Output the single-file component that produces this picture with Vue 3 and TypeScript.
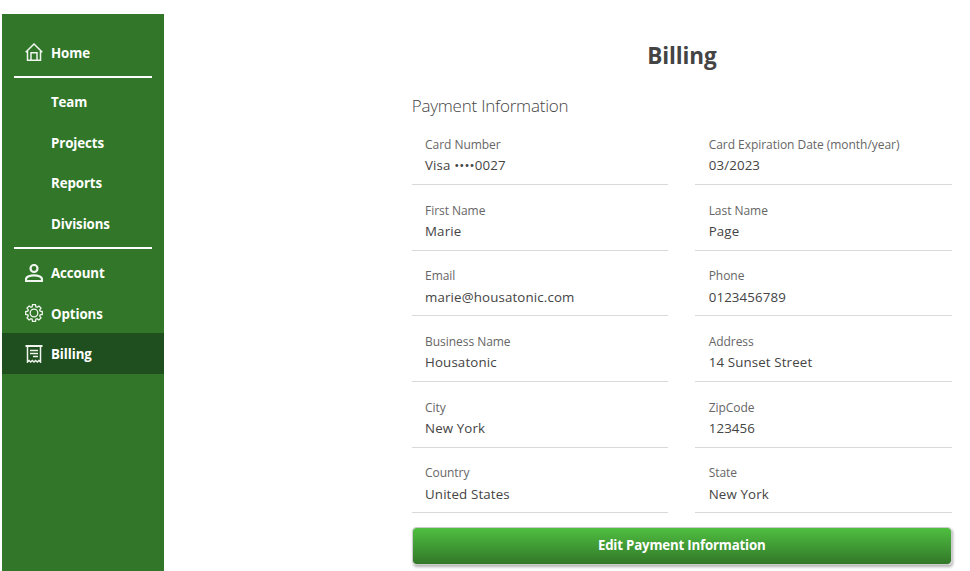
<script setup lang="ts">
interface Field { label: string; value: string }

const teamLinks: string[] = ['Team', 'Projects', 'Reports', 'Divisions']

const fields: Field[] = [
  { label: 'Card Number', value: 'Visa ••••0027' },
  { label: 'Card Expiration Date (month/year)', value: '03/2023' },
  { label: 'First Name', value: 'Marie' },
  { label: 'Last Name', value: 'Page' },
  { label: 'Email', value: 'marie@housatonic.com' },
  { label: 'Phone', value: '0123456789' },
  { label: 'Business Name', value: 'Housatonic' },
  { label: 'Address', value: '14 Sunset Street' },
  { label: 'City', value: 'New York' },
  { label: 'ZipCode', value: '123456' },
  { label: 'Country', value: 'United States' },
  { label: 'State', value: 'New York' },
]
</script>

<template>
  <div class="page">
    <nav class="sidebar">
      <a class="link">
        <svg class="icon" viewBox="0 0 18 18">
          <path d="M.7 9.2 9 1l8.300 8.200M2.500 8v9.200h13V8M6 17V9.700h6V17" />
        </svg>
        <span>Home</span>
      </a>
      <div class="divider"></div>
      <a v-for="name in teamLinks" :key="name" class="link sub"><span>{{ name }}</span></a>
      <div class="divider"></div>
      <a class="link">
        <svg class="icon person" viewBox="0 0 18 18">
          <circle cx="9" cy="4.500" r="3.500" />
          <path d="M1 17v-1.800c0-2.600 4.500-3.900 8-3.900s8 1.300 8 3.900V17z" />
        </svg>
        <span>Account</span>
      </a>
      <a class="link">
        <svg class="icon gear" viewBox="0 0 18 18">
          <circle cx="9" cy="9" r="3.800" />
          <path d="M7.500.7h3l.4 2.100 1.100.5 1.900-1.300 2.100 2.100L14.700 6l.5 1.100 2.100.4v3l-2.100.4-.5 1.100 1.300 1.900-2.100 2.100-1.900-1.300-1.100.5-.4 2.100h-3l-.4-2.100L6 14.700 4.100 16 2 13.900 3.300 12l-.5-1.100-2.100-.4v-3l2.100-.4L3.300 6 2 4.100 4.100 2 6 3.300l1.100-.5z" />
        </svg>
        <span>Options</span>
      </a>
      <a class="link active">
        <svg class="icon receipt" viewBox="0 0 18 18">
          <path class="bar" d="M.5 1h17" />
          <path d="M2.500 1v16l1.600-1.500L5.700 17l1.650-1.500L9 17l1.650-1.500L12.300 17l1.600-1.500L15.500 17V1M5 5.500h8M5 8.500h8M8 11.500h5" />
        </svg>
        <span>Billing</span>
      </a>
    </nav>

    <main class="content">
      <h1 class="title">Billing</h1>
      <h2 class="section">Payment Information</h2>
      <dl class="fields">
        <div v-for="field in fields" :key="field.label" class="field">
          <dt>{{ field.label }}</dt>
          <dd>{{ field.value }}</dd>
        </div>
      </dl>
      <button class="edit" type="button">Edit Payment Information</button>
    </main>
  </div>
</template>

<style>
body {
  background: #fff;
}
</style>

<style scoped>
.page {
  display: flex;
  box-sizing: border-box;
  height: 571px;
  padding: 14px 18px 0 2px;
  overflow: hidden;
  font-family: "Open Sans", "Noto Sans", sans-serif;
  color: #444;
}
.sidebar {
  box-sizing: border-box;
  width: 162px;
  flex: none;
  padding-top: 17.8px;
  background: #327729;
}
.link {
  display: flex;
  align-items: center;
  gap: 8px;
  box-sizing: border-box;
  height: 40.5px;
  padding-left: 23px;
  color: #fff;
  font-size: 13.3px;
  font-weight: 700;
  letter-spacing: -.1px;
  line-height: 20px;
}
.link span {
  padding-top: 1.3px;
}
.sub {
  padding-left: 49px;
}
.active {
  background: #1f4f1e;
}
.divider {
  height: 2px;
  margin: 3.5px 12px;
  background: #fff;
}
.icon {
  width: 18px;
  height: 18px;
  flex: none;
  fill: none;
  stroke: #f0f5ef;
  stroke-width: 1.5;
}
.person {
  stroke-width: 2.2;
}
.gear {
  stroke-width: 1.3;
}
.receipt .bar {
  stroke-width: 2;
}
.content {
  width: 540.3px;
  margin-left: auto;
}
.title {
  margin: 25px 0 0;
  font-size: 22.5px;
  font-weight: 700;
  letter-spacing: -.1px;
  line-height: 34px;
  text-align: center;
}
.section {
  margin: 20px 0 .35px;
  font-size: 17px;
  font-weight: 300;
  letter-spacing: -.22px;
  line-height: 26px;
}
.fields {
  display: grid;
  grid-template-columns: 1fr 1fr;
  column-gap: 27px;
  grid-auto-rows: 65.7px;
  margin: 0;
}
.field {
  box-sizing: border-box;
  padding: 15.65px 0 0 13.3px;
  border-bottom: 1px solid #d9d9d9;
}
.field dt {
  font-size: 12px;
  letter-spacing: -.04px;
  line-height: 19px;
  color: #666;
}
.field dd {
  margin: 1.450px 0 0;
  font-size: 13.3px;
  letter-spacing: .14px;
  line-height: 21px;
}
.edit {
  display: block;
  box-sizing: border-box;
  width: 540px;
  height: 38px;
  margin-top: 13.25px;
  padding: 0 0 2px;
  border: 1px solid #ccc;
  border-radius: 4px;
  background: linear-gradient(#4fbf40, #327729) padding-box;
  box-shadow: 1px 2px 3px rgba(0, 0, 0, .3);
  color: #fff;
  font-family: inherit;
  font-size: 13.3px;
  font-weight: 700;
  letter-spacing: -.2px;
}
</style>
